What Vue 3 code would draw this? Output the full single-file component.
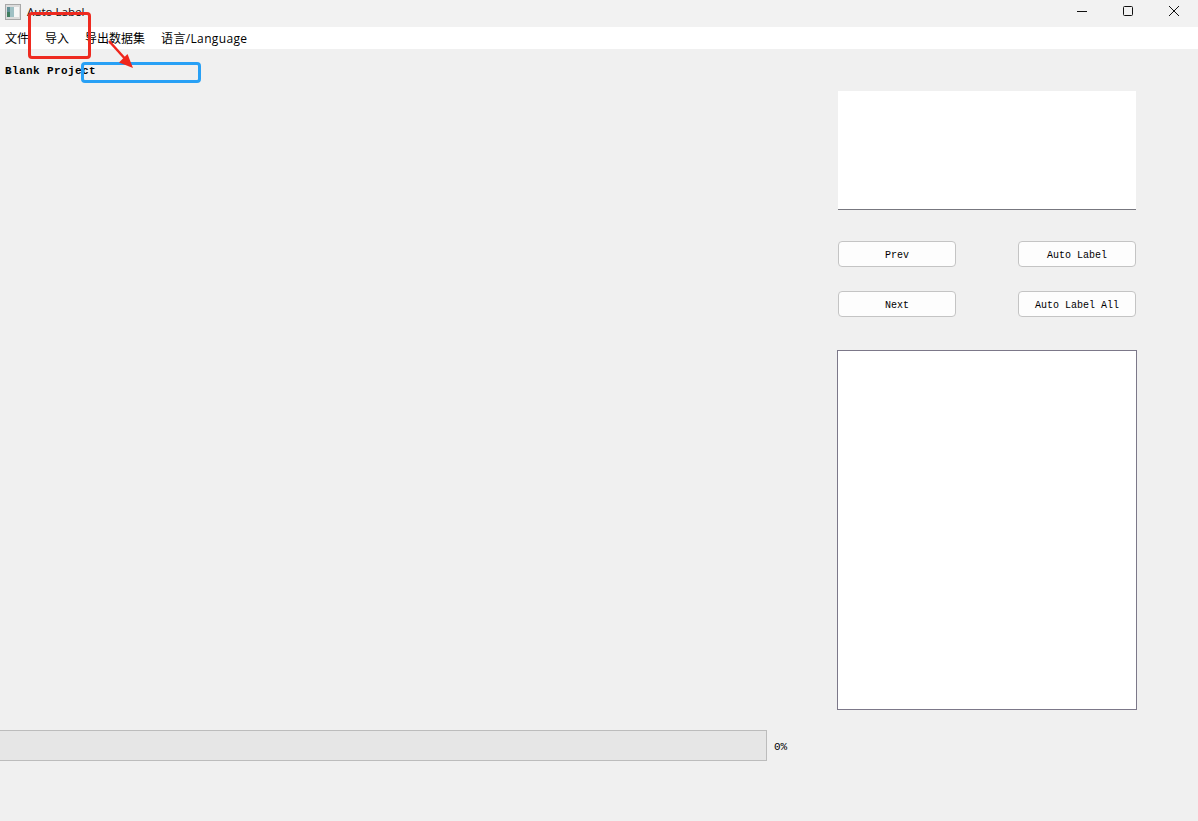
<script setup>
const menus = ['文件', '导入', '导出数据集', '语言/Language']
</script>

<template>
  <div class="window">
    <header class="titlebar">
      <div class="title-left">
        <svg class="app-icon" width="16" height="16" viewBox="0 0 16 16">
          <rect x="0.5" y="0.5" width="15" height="15" fill="#dcdcdc" stroke="#a8a8a8" />
          <rect x="2" y="3" width="3" height="5" fill="#5f8f96" />
          <rect x="2" y="8" width="3" height="5" fill="#3f7d5f" />
          <rect x="5" y="3" width="4" height="10" fill="#9fc0c4" />
          <rect x="9" y="3" width="5" height="10" fill="#f6f6f6" />
        </svg>
        <span class="title">Auto Label</span>
      </div>
      <div class="controls">
        <svg class="ctl" width="46" height="27" viewBox="0 0 46 27"><path d="M18 11.5h10" stroke="#111" fill="none" /></svg>
        <svg class="ctl" width="46" height="27" viewBox="0 0 46 27"><rect x="18.5" y="6.5" width="9" height="9" rx="1" stroke="#111" fill="none" /></svg>
        <svg class="ctl" width="46" height="27" viewBox="0 0 46 27"><path d="M18 6l10 10M28 6l-10 10" stroke="#111" fill="none" /></svg>
      </div>
    </header>

    <nav class="menubar">
      <span v-for="m in menus" :key="m" class="menu">{{ m }}</span>
    </nav>

    <main class="content">
      <section class="left">
        <div class="project">Blank Project</div>
        <div class="progress-row">
          <div class="progress"></div>
          <span class="percent">0%</span>
        </div>
      </section>

      <aside class="right">
        <div class="preview"></div>
        <div class="buttons">
          <button class="btn">Prev</button>
          <button class="btn">Auto Label</button>
          <button class="btn">Next</button>
          <button class="btn">Auto Label All</button>
        </div>
        <div class="list"></div>
      </aside>
    </main>

    <div class="mark red"></div>
    <div class="mark blue"></div>
    <svg class="arrow" width="40" height="40" viewBox="0 0 40 40">
      <path d="M3 3L22 24" stroke="#f0261c" stroke-width="2.5" fill="none" />
      <path d="M27 30L13 24.5L21.5 16Z" fill="#f0261c" />
    </svg>
  </div>
</template>

<style>
html, body { margin: 0; background: #f0f0f0; }
</style>

<style scoped>
.window {
  position: relative;
  width: 1198px;
  height: 821px;
  overflow: hidden;
  background: #f0f0f0;
  font-family: "Liberation Mono", "Noto Sans CJK SC", monospace;
  color: #000;
}
.titlebar {
  height: 27px;
  background: #f2f2f2;
  display: flex;
  justify-content: space-between;
}
.title-left { display: flex; align-items: center; padding-left: 5px; gap: 6px; height: 22px; margin-top: 1px; }
.app-icon { flex: none; }
.title { font: 11.5px/14px "Noto Sans", "Liberation Sans", sans-serif; color: #111; margin-top: -1px; }
.controls { display: flex; padding-right: 1px; }
.ctl { display: block; }
.menubar {
  height: 22px;
  box-sizing: border-box;
  padding: 1px 0 0 5px;
  background: #fff;
  display: flex;
  align-items: center;
  gap: 16px;
  font: 12px/21px "Open Sans", "Noto Sans CJK SC", sans-serif;
}
.menu:last-child { letter-spacing: 0.35px; }
.content {
  height: 772px;
  display: grid;
  grid-template-columns: 838px 298px;
}
.left {
  display: flex;
  flex-direction: column;
  justify-content: space-between;
  padding: 16px 0 60px;
}
.project {
  padding-left: 5px;
  font-size: 11px;
  font-weight: 700;
  line-height: 13px;
  letter-spacing: 0.4px;
}
.progress-row { display: flex; align-items: center; gap: 7px; }
.progress {
  width: 767px;
  height: 31px;
  box-sizing: border-box;
  background: #e6e6e6;
  border: 1px solid #bcbcbc;
  border-left: 0;
}
.percent { font-size: 11px; padding-top: 2px; }
.right { padding-top: 42px; }
.preview {
  height: 119px;
  box-sizing: border-box;
  background: #fff;
  border-bottom: 1px solid #77777f;
}
.buttons {
  margin-top: 31px;
  display: grid;
  grid-template-columns: 118px 118px;
  justify-content: space-between;
  row-gap: 24px;
}
.btn {
  height: 26px;
  box-sizing: border-box;
  padding: 2px 0 0;
  background: #fdfdfd;
  border: 1px solid #c4c4c4;
  border-radius: 4px;
  font-family: "Liberation Mono", monospace;
  font-size: 10px;
  color: #000;
}
.list {
  margin: 33px -1px 0;
  height: 360px;
  box-sizing: border-box;
  background: #fff;
  border: 1px solid #7c7889;
}
.mark { position: absolute; box-sizing: border-box; border-radius: 4px; }
.red { left: 28px; top: 12px; width: 63px; height: 47px; border: 3px solid #ee2a20; }
.blue { left: 81px; top: 62px; width: 120px; height: 21px; border: 3px solid #28a0f5; }
.arrow { position: absolute; left: 106px; top: 38px; }
</style>
